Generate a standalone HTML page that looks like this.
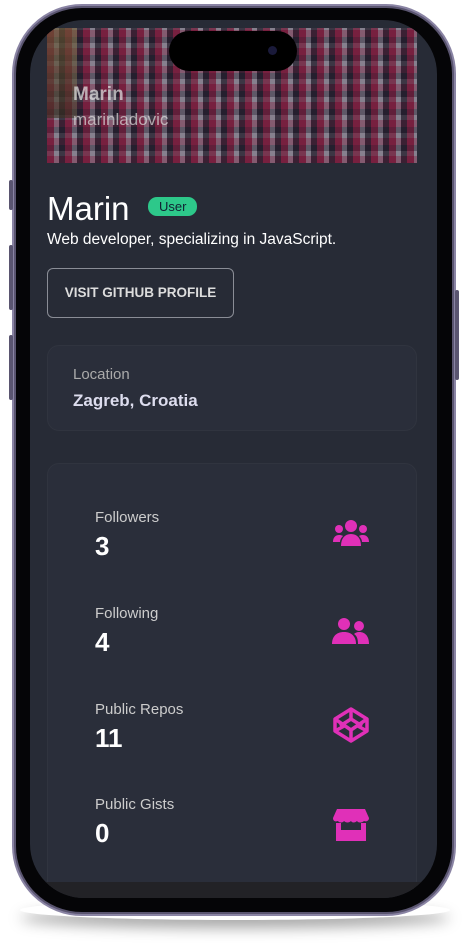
<!DOCTYPE html>
<html><head><style>
*{margin:0;padding:0;box-sizing:border-box}
body{width:470px;height:943px;background:#fff;position:relative;overflow:hidden;font-family:"Liberation Sans",sans-serif}
.shadow{position:absolute;left:20px;top:900px;width:430px;height:20px;border-radius:50%;box-shadow:0 8px 14px rgba(0,0,0,.35)}
.frame{position:absolute;left:12px;top:4px;width:444px;height:912px;border-radius:70px;background:#5a5570;border:2px solid #8a84a4}
.bezel{position:absolute;left:16px;top:8px;width:436px;height:904px;border-radius:66px;background:#050507}
.screen{position:absolute;left:30px;top:20px;width:407px;height:878px;border-radius:54px;background:#272b36;overflow:hidden}
.btn{position:absolute;background:#5a5570;width:4px;border-radius:2px}
.photo{position:absolute;left:17px;top:8px;width:370px;height:135px;background:
repeating-linear-gradient(90deg,rgba(130,25,60,.6) 0 7px,rgba(200,200,215,.3) 7px 12px,rgba(30,25,40,.6) 12px 18px),
repeating-linear-gradient(0deg,rgba(130,25,60,.5) 0 7px,rgba(200,200,215,.25) 7px 12px,rgba(30,25,40,.6) 12px 18px),#4a3e4c}
.photo:before{content:"";position:absolute;left:0;top:0;width:30px;height:90px;background:linear-gradient(#6b5a30,#3a3020);opacity:.6}
.island{position:absolute;left:139px;top:11px;width:128px;height:40px;border-radius:20px;background:#000}
.island:after{content:"";position:absolute;right:20px;top:15px;width:9px;height:9px;border-radius:50%;background:#1a1a3a}
.pn{position:absolute;left:43px;top:64px;color:#ddd;font-size:19px;font-weight:bold;opacity:.75}
.pu{position:absolute;left:43px;top:90px;color:#ddd;font-size:17px;opacity:.7}
.name{position:absolute;left:17px;top:170px;color:#fff;font-size:33px}
.badge{position:absolute;left:118px;top:177px;background:#2dc88a;color:#123;font-size:13px;padding:2px 11px;border-radius:9px}
.bio{position:absolute;left:17px;top:211px;color:#fff;font-size:15.5px}
.gh{position:absolute;left:17px;top:248px;width:187px;height:50px;border:1px solid #8a8d96;border-radius:6px;color:#ddd;font-size:13.5px;font-weight:bold;line-height:48px;text-align:center}
.card{position:absolute;left:17px;width:370px;background:#2a2e3a;border-radius:12px;border:1px solid #30343f}
.lbl{color:#aaa;font-size:15px}
.val{color:#dde;font-size:17px;font-weight:bold;margin-top:8px}
.stat{position:absolute;left:48px}
.stat .l{color:#ccc;font-size:15px}
.stat .v{color:#fff;font-size:26px;font-weight:900;margin-top:5px}
.ic{position:absolute;left:284px}
.bot{position:absolute;left:0;top:862px;width:407px;height:16px;background:#222226}
</style></head><body>
<div class="shadow"></div>
<div class="frame"></div>
<div class="btn" style="left:9px;top:180px;height:30px"></div>
<div class="btn" style="left:9px;top:245px;height:65px"></div>
<div class="btn" style="left:9px;top:335px;height:65px"></div>
<div class="btn" style="left:455px;top:290px;height:90px"></div>
<div class="bezel"></div>
<div class="screen">
 <div class="photo"></div>
 <div class="pn">Marin</div>
 <div class="pu">marinladovic</div>
 <div class="island"></div>
 <div class="name">Marin</div>
 <div class="badge">User</div>
 <div class="bio">Web developer, specializing in JavaScript.</div>
 <div class="gh">VISIT GITHUB PROFILE</div>
 <div class="card" style="top:325px;height:86px;padding:20px 25px"><div class="lbl">Location</div><div class="val">Zagreb, Croatia</div></div>
 <div class="card" style="top:443px;height:430px"></div>
 <div class="bot"></div>
 <div class="stat" style="left:65px;top:489px"><div class="l">Followers</div><div class="v">3</div></div>
 <div class="stat" style="left:65px;top:585px"><div class="l">Following</div><div class="v">4</div></div>
 <div class="stat" style="left:65px;top:681px"><div class="l">Public Repos</div><div class="v">11</div></div>
 <div class="stat" style="left:65px;top:776px"><div class="l">Public Gists</div><div class="v">0</div></div>
 <svg class="ic" style="left:301px;top:498px" width="40" height="30" viewBox="0 0 40 30" fill="#e030b8"><circle cx="20" cy="8" r="6"/><circle cx="8" cy="11" r="4"/><circle cx="32" cy="11" r="4"/><path d="M10 28c0-8 4-12 10-12s10 4 10 12z"/><path d="M2 24c0-5 3-7 6-7s4 1 4 1c-2 2-3 4-3 6z"/><path d="M38 24c0-5-3-7-6-7s-4 1-4 1c2 2 3 4 3 6z"/></svg>
 <svg class="ic" style="left:302px;top:597px" width="38" height="28" viewBox="0 0 38 28" fill="#e030b8"><circle cx="12" cy="7" r="6"/><circle cx="27" cy="9" r="5"/><path d="M0 27c0-8 5-12 12-12s12 4 12 12z"/><path d="M26 27c0-5-1-8-4-10 1-1 3-2 5-2 6 0 10 4 10 12z"/></svg>
 <svg class="ic" style="left:302px;top:686px" width="38" height="38" viewBox="0 0 38 38" fill="none" stroke="#e030b8" stroke-width="3.5" stroke-linejoin="round"><path d="M19 3L35 13V25L19 35L3 25V13Z"/><path d="M19 3V13M3 13L19 24L35 13M19 13L8 20M19 13L30 20M19 35V24M3 25L14 19M35 25L24 19"/></svg>
 <svg class="ic" style="left:302px;top:788px" width="38" height="34" viewBox="0 0 38 34" fill="#e030b8"><path d="M5 1H33L37 10C37 13 34 14 32 13 30 15 26 15 25 13 23 15 20 15 19 13 17 15 14 15 12 13 11 15 7 15 6 13 3 14 1 13 1 10Z"/><path d="M4 15H9V22H29V15H34V33H4Z"/></svg>
</div>
</body></html>
